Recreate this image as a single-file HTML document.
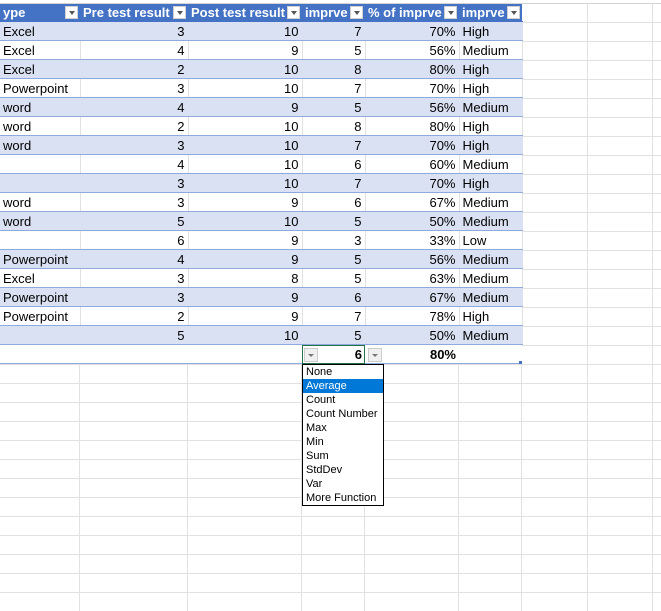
<!DOCTYPE html>
<html><head><style>
body{margin:0;width:661px;height:611px;overflow:hidden;background:#fff;font-family:"Liberation Sans",sans-serif;font-size:13px;position:relative}
.grid{position:absolute;left:0;top:4px;width:661px;height:607px;
background-image:repeating-linear-gradient(to bottom,transparent 0,transparent 18px,#e1e1e1 18px,#e1e1e1 19px);}
.v{position:absolute;top:0;bottom:0;width:1px;background:#e1e1e1}
table{position:absolute;left:0;top:4px;border-collapse:collapse;table-layout:fixed}
td{height:16px;padding:2px 3px 0 3px;white-space:nowrap;overflow:hidden;border-bottom:1px solid #8ea9db;line-height:16px;color:#000}
tr.b td{background:#d9e1f2}
tr.w td{background:#fff}
tr.h td{height:16px;padding-top:1px;line-height:16px;background:#4472c4;color:#fff;font-weight:bold;position:relative;border-bottom:1px solid #4472c4}
td.r{text-align:right}
tr.w td, tr.b td{border-right:1px solid #e1e1e1}
tr.b td{border-right-color:#d9e1f2}
.fb{position:absolute;right:2px;top:2px;width:13px;height:13px;background:#fff;border:1px solid #d0d0d0;box-sizing:border-box}
.fb:after{content:"";position:absolute;left:3px;top:4px;border-left:3px solid transparent;border-right:3px solid transparent;border-top:4px solid #555}
tr.t td{height:15px;background:#fff;border-top:1px solid #8ea9db;border-bottom:1px solid #8ea9db;font-weight:bold}
.dd{position:absolute;left:302px;top:364px;width:80px;height:140px;border:1px solid #000;background:#fff;font-size:11px}
.dd div{height:14px;line-height:14px;padding-left:3px}
.dd .s{background:#0078d7;color:#fff}
.sb{position:absolute;width:14px;height:14px;background:#f0f0f0;border:1px solid #ccc;box-sizing:border-box}
.sb:after{content:"";position:absolute;left:3px;top:5px;border-left:3px solid transparent;border-right:3px solid transparent;border-top:3px solid #777}
</style></head><body>
<div class="grid"></div>
<div class="v" style="left:79px"></div><div class="v" style="left:187px"></div><div class="v" style="left:301px"></div><div class="v" style="left:364px"></div><div class="v" style="left:458px"></div><div class="v" style="left:521px"></div><div class="v" style="left:587px"></div><div class="v" style="left:652px"></div>
<div style="position:absolute;left:0;top:0;width:661px;height:3px;background:#fff;border-bottom:1px solid #d4d4d4"></div>
<table>
<colgroup><col style="width:80px"><col style="width:108px"><col style="width:114px"><col style="width:63px"><col style="width:94px"><col style="width:63px"></colgroup>
<tr class="h"><td>ype<span class="fb"></span></td><td>Pre test result<span class="fb"></span></td><td>Post test result<span class="fb"></span></td><td>imprve<span class="fb"></span></td><td>% of imprve<span class="fb"></span></td><td>imprve<span class="fb"></span></td></tr>
<tr class="b"><td>Excel</td><td class="r">3</td><td class="r">10</td><td class="r">7</td><td class="r">70%</td><td>High</td></tr>
<tr class="w"><td>Excel</td><td class="r">4</td><td class="r">9</td><td class="r">5</td><td class="r">56%</td><td>Medium</td></tr>
<tr class="b"><td>Excel</td><td class="r">2</td><td class="r">10</td><td class="r">8</td><td class="r">80%</td><td>High</td></tr>
<tr class="w"><td>Powerpoint</td><td class="r">3</td><td class="r">10</td><td class="r">7</td><td class="r">70%</td><td>High</td></tr>
<tr class="b"><td>word</td><td class="r">4</td><td class="r">9</td><td class="r">5</td><td class="r">56%</td><td>Medium</td></tr>
<tr class="w"><td>word</td><td class="r">2</td><td class="r">10</td><td class="r">8</td><td class="r">80%</td><td>High</td></tr>
<tr class="b"><td>word</td><td class="r">3</td><td class="r">10</td><td class="r">7</td><td class="r">70%</td><td>High</td></tr>
<tr class="w"><td></td><td class="r">4</td><td class="r">10</td><td class="r">6</td><td class="r">60%</td><td>Medium</td></tr>
<tr class="b"><td></td><td class="r">3</td><td class="r">10</td><td class="r">7</td><td class="r">70%</td><td>High</td></tr>
<tr class="w"><td>word</td><td class="r">3</td><td class="r">9</td><td class="r">6</td><td class="r">67%</td><td>Medium</td></tr>
<tr class="b"><td>word</td><td class="r">5</td><td class="r">10</td><td class="r">5</td><td class="r">50%</td><td>Medium</td></tr>
<tr class="w"><td></td><td class="r">6</td><td class="r">9</td><td class="r">3</td><td class="r">33%</td><td>Low</td></tr>
<tr class="b"><td>Powerpoint</td><td class="r">4</td><td class="r">9</td><td class="r">5</td><td class="r">56%</td><td>Medium</td></tr>
<tr class="w"><td>Excel</td><td class="r">3</td><td class="r">8</td><td class="r">5</td><td class="r">63%</td><td>Medium</td></tr>
<tr class="b"><td>Powerpoint</td><td class="r">3</td><td class="r">9</td><td class="r">6</td><td class="r">67%</td><td>Medium</td></tr>
<tr class="w"><td>Powerpoint</td><td class="r">2</td><td class="r">9</td><td class="r">7</td><td class="r">78%</td><td>High</td></tr>
<tr class="b"><td></td><td class="r">5</td><td class="r">10</td><td class="r">5</td><td class="r">50%</td><td>Medium</td></tr>
<tr class="t"><td></td><td></td><td></td><td class="r" style="outline:1px solid #217346;outline-offset:-1px">6</td><td class="r">80%</td><td></td></tr>
</table>
<div class="sb" style="left:304px;top:348px"></div>
<div class="sb" style="left:368px;top:348px"></div>
<div style="position:absolute;left:519px;top:361px;width:3px;height:3px;background:#4472c4"></div>
<div class="dd"><div>None</div><div class="s">Average</div><div>Count</div><div>Count Number</div><div>Max</div><div>Min</div><div>Sum</div><div>StdDev</div><div>Var</div><div>More Function</div></div>
</body></html>
